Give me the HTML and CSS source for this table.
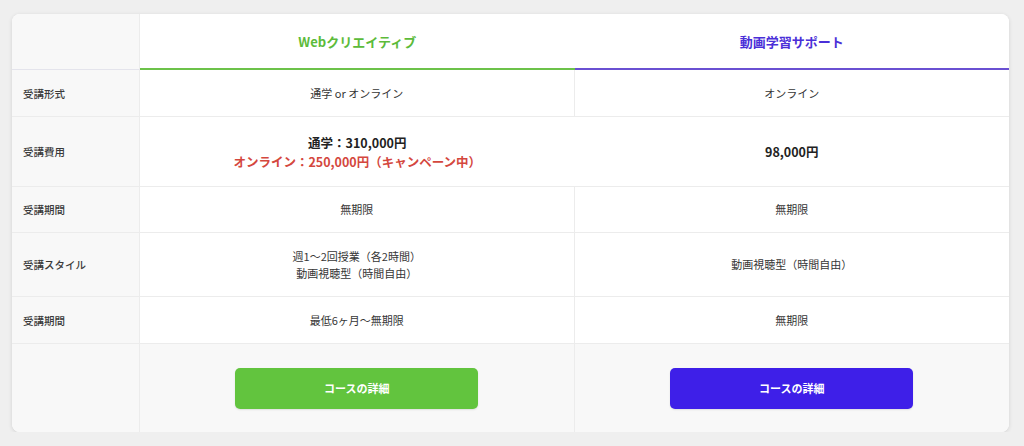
FILE: index.html
```html
<!DOCTYPE html>
<html lang="ja">
<head>
<meta charset="utf-8">
<title>コース比較</title>
<link rel="stylesheet" href="styles.css">
</head>
<body>
<div class="card">
  <div class="cell label head-label"></div>
  <div class="cell head head-green">Webクリエイティブ</div>
  <div class="cell head head-purple">動画学習サポート</div>

  <div class="cell label">受講形式</div>
  <div class="cell val sep">通学 or オンライン</div>
  <div class="cell val">オンライン</div>

  <div class="cell label">受講費用</div>
  <div class="cell val fee">
    <span>通学：310,000円</span>
    <span class="red">オンライン：250,000円（キャンペーン中）</span>
  </div>
  <div class="cell val fee">98,000円</div>

  <div class="cell label">受講期間</div>
  <div class="cell val sep">無期限</div>
  <div class="cell val">無期限</div>

  <div class="cell label">受講スタイル</div>
  <div class="cell val sep">週1〜2回授業（各2時間）<br>動画視聴型（時間自由）</div>
  <div class="cell val">動画視聴型（時間自由）</div>

  <div class="cell label">受講期間</div>
  <div class="cell val sep">最低6ヶ月〜無期限</div>
  <div class="cell val">無期限</div>

  <div class="cell label last"></div>
  <div class="cell btn-cell sep last"><a class="btn btn-green" href="#">コースの詳細</a></div>
  <div class="cell btn-cell last"><a class="btn btn-purple" href="#">コースの詳細</a></div>
</div>
</body>
</html>
```

FILE: styles.css
```css
html, body {
  margin: 0;
  padding: 0;
}
body {
  background: #efefef;
  font-family: "Noto Sans CJK JP", "Noto Sans", sans-serif;
  color: #333;
  padding: 14px 15px 0 12px;
}
.card {
  display: grid;
  grid-template-columns: 128px 1fr 1fr;
  grid-template-rows: 56px 47px 70px 46px 64px 47px 88px;
  background: #fff;
  border-radius: 8px;
  box-shadow: 0 1px 4px rgba(0, 0, 0, 0.12);
  overflow: hidden;
}
.cell {
  box-sizing: border-box;
  border-bottom: 1px solid #ececec;
  display: flex;
  align-items: center;
}
.label {
  background: #f8f8f8;
  border-right: 1px solid #ececec;
  padding-left: 11px;
  font-size: 10.5px;
  font-weight: 500;
  color: #3a3a3a;
}
.head-label {
  border-bottom: 1px solid #e4e4ec;
}
.head {
  justify-content: center;
  font-size: 13px;
  font-weight: 700;
  background: #fff;
}
.head-green {
  color: #5cbb3a;
  border-bottom: 2px solid #6cc24a;
}
.head-purple {
  color: #4a2fd8;
  border-bottom: 2px solid #6a50d2;
}
.val {
  justify-content: center;
  text-align: center;
  font-size: 11px;
  line-height: 17px;
  color: #363636;
}
.sep {
  border-right: 1px solid #ececec;
}
.fee {
  flex-direction: column;
  font-size: 12.5px;
  line-height: 19px;
  font-weight: 700;
  color: #222;
}
.red {
  color: #d4473e;
}
.btn-cell {
  background: #f8f8f8;
  justify-content: center;
}
.last {
  border-bottom: none;
}
.btn {
  width: 56%;
  height: 41px;
  border-radius: 5px;
  display: flex;
  align-items: center;
  justify-content: center;
  color: #fff;
  font-size: 11px;
  font-weight: 700;
  text-decoration: none;
  box-shadow: 0 1px 2px rgba(0, 0, 0, 0.1);
}
.btn-green {
  background: #62c43e;
}
.btn-purple {
  background: #3e1fe8;
}
```
